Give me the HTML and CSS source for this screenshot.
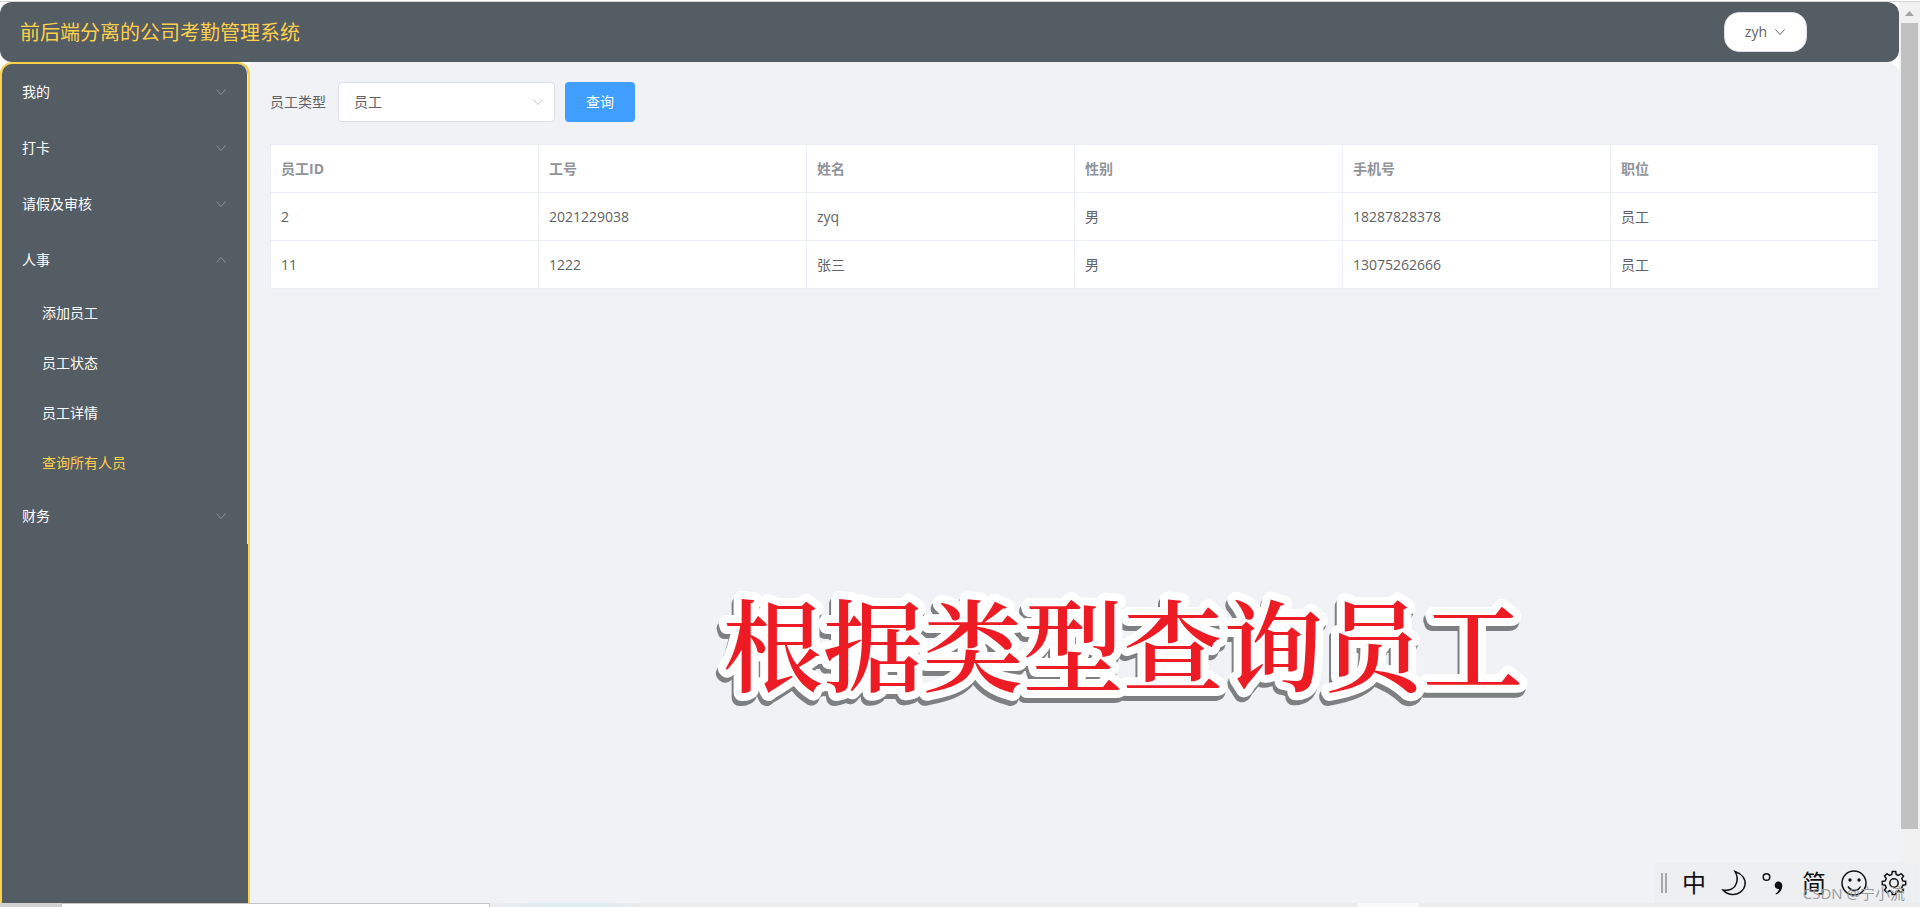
FILE: index.html
```html
<!DOCTYPE html>
<html lang="zh-CN">
<head>
<meta charset="utf-8">
<title>前后端分离的公司考勤管理系统</title>
<link rel="stylesheet" href="styles.css">
</head>
<body>
<svg class="defs" aria-hidden="true">
  <symbol id="chevron" viewBox="0 0 12 12"><path d="M1.500 3.500 6 8.500l4.500-5" fill="none" stroke="currentColor"/></symbol>
</svg>
<div class="window">
  <div class="page">
    <header class="header">
      <h1 class="title">前后端分离的公司考勤管理系统</h1>
      <button class="user" type="button">zyh <svg class="chevron"><use href="#chevron"/></svg></button>
    </header>
    <div class="body">
      <nav class="sidebar">
        <ul class="menu">
          <li><button class="group" type="button">我的<svg class="chevron"><use href="#chevron"/></svg></button></li>
          <li><button class="group" type="button">打卡<svg class="chevron"><use href="#chevron"/></svg></button></li>
          <li><button class="group" type="button">请假及审核<svg class="chevron"><use href="#chevron"/></svg></button></li>
          <li>
            <button class="group open" type="button" aria-expanded="true">人事<svg class="chevron"><use href="#chevron"/></svg></button>
            <ul class="submenu">
              <li><a class="item" href="#add">添加员工</a></li>
              <li><a class="item" href="#status">员工状态</a></li>
              <li><a class="item" href="#detail">员工详情</a></li>
              <li><a class="item active" href="#all">查询所有人员</a></li>
            </ul>
          </li>
          <li><button class="group" type="button">财务<svg class="chevron"><use href="#chevron"/></svg></button></li>
        </ul>
      </nav>
      <main class="main">
        <form class="filter">
          <label for="type">员工类型</label>
          <div class="select-box">
            <select id="type"><option>员工</option></select>
            <svg class="chevron"><use href="#chevron"/></svg>
          </div>
          <button class="query" type="button">查询</button>
        </form>
        <table class="table">
          <thead><tr><th>员工ID</th><th>工号</th><th>姓名</th><th>性别</th><th>手机号</th><th>职位</th></tr></thead>
          <tbody>
            <tr><td>2</td><td>2021229038</td><td>zyq</td><td>男</td><td>18287828378</td><td>员工</td></tr>
            <tr><td>11</td><td>1222</td><td>张三</td><td>男</td><td>13075262666</td><td>员工</td></tr>
          </tbody>
        </table>
      </main>
    </div>
  </div>
  <div class="scrollbar">
    <svg class="arrow" viewBox="0 0 9 5"><path d="M4.500 0 9 5H0z"/></svg>
    <div class="thumb"></div>
  </div>
</div>
<div class="taskbar"><span class="task-start"></span><span class="task-window"></span><span class="task-glow"></span><span class="task-tab"></span></div>

<svg class="caption" viewBox="0 0 840 140"><text x="16" y="106">根据类型查询员工</text></svg>

<div class="ime">
  <span class="grip"></span>
  <span class="glyph">中</span>
  <svg class="icon" viewBox="0 0 26 26"><path d="M14 1.500C21 4 25 9 24 15c-1 6-7 10-13 9.500C7 24 4 22.500 2 20c7 1 12-2 13.500-7C17 9 16 5 14 1.500z"/></svg>
  <svg class="icon" viewBox="0 0 26 26"><circle cx="5.500" cy="7" r="3.300"/><path class="solid" d="M17 11.500c3 0 4.500 2 4.300 4.700-.3 3.800-3 7.300-6.300 8.300l-.5-1c2-1 3.300-2.700 3.500-4.500-2.300.3-4.300-1.200-4.300-3.500 0-2.300 1.500-4 3.300-4z"/></svg>
  <span class="glyph">简</span>
  <svg class="icon" viewBox="0 0 26 26"><circle cx="13" cy="13" r="12"/><circle class="solid" cx="9" cy="10" r="1.700"/><circle class="solid" cx="18" cy="10" r="1.700"/><path d="M7 16.500c3 5 10 5 12.500 0"/></svg>
  <svg class="icon" viewBox="0 0 26 26"><circle cx="13" cy="13" r="4.200"/><path d="M11.300 1.500h3.400l.5 2.900 2.300 1 2.600-1.800 2.400 2.400-1.700 2.500 1 2.400 2.900.5v3.300l-2.900.5-1 2.400 1.700 2.500-2.400 2.400-2.600-1.800-2.300 1-.5 2.900h-3.400l-.5-2.900-2.300-1-2.600 1.800-2.400-2.400 1.700-2.500-1-2.400-2.900-.5v-3.300l2.900-.5 1-2.400-1.700-2.500 2.400-2.400 2.600 1.800 2.300-1z"/></svg>
  <span class="watermark">CSDN @宁小流</span>
</div>
</body>
</html>
```
FILE: styles.css
```css
* { box-sizing: border-box; }
body {
  margin: 0;
  min-height: 100vh;
  display: flex;
  flex-direction: column;
  border-top: 1px solid #fff;
  background: #fff;
  color: #606266;
  font: 14px/20px "Open Sans", "Noto Sans CJK SC", sans-serif;
  overflow: hidden;
}
button, select { font: inherit; cursor: pointer; }
ul { list-style: none; margin: 0; padding: 0; }
.defs { position: absolute; width: 0; height: 0; }
.chevron { width: 12px; height: 12px; flex: none; }

.window { flex: 1; display: flex; border-top: 1px solid #d4d5d7; }
.page { flex: 1; min-width: 0; display: flex; flex-direction: column; }
.header {
  height: 60px;
  padding: 0 92px 0 20px;
  display: flex;
  align-items: center;
  justify-content: space-between;
  background: #545c64;
  border-radius: 12px;
}
.title { margin: 0; padding-top: 2px; color: #ffd04b; font-size: 20px; line-height: 28px; font-weight: 400; }
.user {
  height: 40px;
  padding: 0 20px;
  display: flex;
  align-items: center;
  gap: 7px;
  background: #fff;
  border: 1px solid #dcdfe6;
  border-radius: 15px;
  color: #606266;
}

.body { flex: 1; display: flex; }
.sidebar {
  width: 250px;
  flex: none;
  background: #545c64;
  border: 2px solid #ffd04b;
  border-bottom: 0;
  border-radius: 12px 12px 0 0;
}
.menu { border-right: 1px solid #e6e6e6; border-radius: 0 10px 0 0; }
.group {
  width: 100%;
  height: 56px;
  padding: 0 20px;
  display: flex;
  align-items: center;
  justify-content: space-between;
  background: none;
  border: 0;
  color: #fff;
}
.group .chevron { color: #909399; }
.open .chevron { transform: rotate(180deg); }
.item {
  height: 50px;
  padding: 0 40px;
  display: flex;
  align-items: center;
  color: #fff;
  text-decoration: none;
}
.item.active { color: #ffd04b; }

.main { flex: 1; min-width: 0; padding: 20px; background: #f0f2f5; border-radius: 0 12px 0 0; }
.filter { display: flex; align-items: center; margin-bottom: 22px; }
.select-box { position: relative; width: 217px; margin: 0 10px 0 12px; }
.select-box select {
  width: 100%;
  height: 40px;
  padding: 0 15px;
  appearance: none;
  background: #fff;
  border: 1px solid #dcdfe6;
  border-radius: 4px;
  color: #606266;
  display: block;
}
.select-box .chevron { position: absolute; right: 11px; top: 14px; color: #c0c4cc; pointer-events: none; }
.query { width: 70px; height: 40px; padding: 0; background: #409eff; border: 0; border-radius: 4px; color: #fff; }

.table {
  width: 100%;
  table-layout: fixed;
  border-collapse: collapse;
  background: #fff;
}
.table th, .table td { height: 48px; padding: 0 10px; border: 1px solid #ebeef5; text-align: left; font-weight: 400; }
.table th { color: #909399; font-weight: 700; }

.scrollbar { width: 21px; padding: 9px 2px 0; background: #f1f1f1; display: flex; flex-direction: column; align-items: center; }
.arrow { width: 9px; height: 5px; fill: #a3a3a3; flex: none; }
.thumb { width: 17px; flex: 1; margin: 7px 0 74px; background: #c1c1c1; }

.taskbar { height: 4px; display: flex; background: #ececec; }
.task-start { width: 61px; background: #d2d2d2; }
.task-window { width: 429px; background: #fff; border: 1px solid #c4c4c4; border-bottom: 0; }
.task-glow { width: 160px; background: linear-gradient(90deg, #ececec, #e0ebf2 30%, #e0ebf2 70%, #ececec); }
.task-tab { width: 61px; margin-left: 708px; background: #fafafa; }

.caption {
  position: absolute;
  left: 707px;
  top: 578px;
  width: 840px;
  height: 140px;
  overflow: visible;
  filter: drop-shadow(-2px 5px 0 #7d7f80);
}
.caption text {
  font: 600 100px "Noto Serif CJK SC", "Noto Sans CJK SC", serif;
  fill: #ed1c24;
  stroke: #fff;
  stroke-width: 16px;
  stroke-linejoin: round;
  paint-order: stroke;
}

.ime {
  position: absolute;
  right: 1px;
  bottom: 4px;
  height: 40px;
  padding: 0 12px 0 6px;
  display: flex;
  align-items: center;
  gap: 14px;
  background: #eeeff1;
  color: #111;
}
.grip { width: 6px; height: 20px; border: solid #a8a8a8; border-width: 0 2px; }
.glyph { width: 26px; font-size: 24px; line-height: 40px; text-align: center; }
.icon { width: 26px; height: 26px; fill: none; stroke: #111; stroke-width: 1.500px; }
.icon .solid { fill: #111; stroke: none; }
.watermark { position: absolute; right: 14px; bottom: 0; color: #9a9c9f; font-size: 15px; white-space: nowrap; }
```
